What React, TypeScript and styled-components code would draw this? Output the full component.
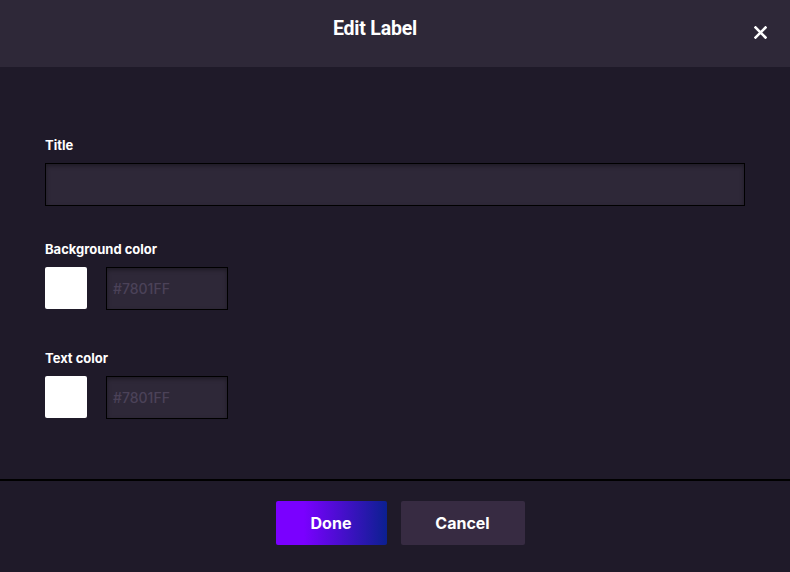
import { useState } from 'react';
import styled, { createGlobalStyle } from 'styled-components';

const GlobalStyle = createGlobalStyle`
  html, body {
    margin: 0;
    padding: 0;
    background: #1f1a29;
    font-family: Inter, "Noto Sans", sans-serif;
  }
  * { box-sizing: border-box; }
`;

type ColorFieldProps = {
  label: string
  value: string
  onChange: (v: string) => void
}
const ColorField = ({ label, value, onChange }: ColorFieldProps) => (
  <Field $after={40}>
    <Label>{label}</Label>
    <ColorRow>
      <Swatch />
      <HexInput placeholder="#7801FF" value={value} onChange={e => onChange(e.target.value)} />
    </ColorRow>
  </Field>
);

const App = () => {
  const [title, setTitle] = useState('');
  const [bg, setBg] = useState('');
  const [fg, setFg] = useState('');

  return <>
    <GlobalStyle />
    <Modal>
      <Header>
        <HeaderTitle>Edit Label</HeaderTitle>
        <CloseBtn type="button" aria-label="Close">
          <svg width="13" height="13" viewBox="0 0 13 13">
            <path d="M1.5 1.5 L11.5 11.5 M11.5 1.5 L1.5 11.5" stroke="#ffffff" strokeWidth="2.6" strokeLinecap="square" />
          </svg>
        </CloseBtn>
      </Header>
      <Body>
        <Field $after={35}>
          <Label>Title</Label>
          <TitleInput value={title} onChange={e => setTitle(e.target.value)} />
        </Field>
        <ColorField label="Background color" value={bg} onChange={setBg} />
        <ColorField label="Text color" value={fg} onChange={setFg} />
      </Body>
      <Footer>
        <DoneBtn type="button">Done</DoneBtn>
        <CancelBtn type="button">Cancel</CancelBtn>
      </Footer>
    </Modal>
  </>
}
export default App;

const Modal = styled.div`
  width: 790px;
  height: 572px;
  display: flex;
  flex-direction: column;
  background: #1f1a29;
`

const Header = styled.div`
  position: relative;
  height: 67px;
  flex-shrink: 0;
  background: #2e2838;
  display: flex;
  align-items: center;
  justify-content: center;
  padding: 0 40px 10px 0;
`

const HeaderTitle = styled.h1`
  margin: 0;
  color: #ffffff;
  font-family: Roboto, Inter, sans-serif;
  font-size: 19.5px;
  font-weight: 700;
  letter-spacing: -0.2px;
`

const CloseBtn = styled.button`
  position: absolute;
  right: 23px;
  top: 26px;
  width: 13px;
  height: 13px;
  padding: 0;
  border: none;
  background: none;
  cursor: pointer;
  display: flex;
`

const Body = styled.div`
  flex-grow: 1;
  padding: 70px 45px 0;
  display: flex;
  flex-direction: column;
`

const Field = styled.div<{ $after: number }>`
  display: flex;
  flex-direction: column;
  gap: 10px;
  margin-bottom: ${p => p.$after}px;
`

const Label = styled.label`
  color: #ffffff;
  font-size: 13px;
  font-weight: 700;
  line-height: 16px;
`

const inputBase = `
  border: 1px solid #000000;
  background: #2e2838;
  box-shadow: inset 0 2px 4px rgba(0, 0, 0, 0.35);
  outline: none;
  color: #ffffff;
  font-family: Inter, "Noto Sans", sans-serif;
  font-size: 14px;
  font-weight: 500;
  &::placeholder { color: #4b4258; }
`

const TitleInput = styled.input`
  ${inputBase}
  width: 700px;
  height: 43px;
  padding: 0 8px;
`

const ColorRow = styled.div`
  display: flex;
  align-items: flex-start;
  gap: 19px;
`

const Swatch = styled.div`
  width: 42px;
  height: 42px;
  border-radius: 2px;
  background: #ffffff;
`

const HexInput = styled.input`
  ${inputBase}
  width: 122px;
  height: 43px;
  padding: 0 6px;
`

const Footer = styled.div`
  height: 93px;
  flex-shrink: 0;
  border-top: 2px solid #000000;
  display: flex;
  justify-content: center;
  align-items: center;
  gap: 14px;
  padding: 0 0 7px 10px;
`

const btnBase = `
  height: 44px;
  border: none;
  border-radius: 2px;
  color: #ffffff;
  font-family: Inter, "Noto Sans", sans-serif;
  font-size: 16px;
  font-weight: 700;
  cursor: pointer;
`

const DoneBtn = styled.button`
  ${btnBase}
  width: 111px;
  background: linear-gradient(90deg, #7a00ff 0%, #7a00ff 25%, #0b2090 100%);
`

const CancelBtn = styled.button`
  ${btnBase}
  width: 124px;
  background: #372b42;
`
